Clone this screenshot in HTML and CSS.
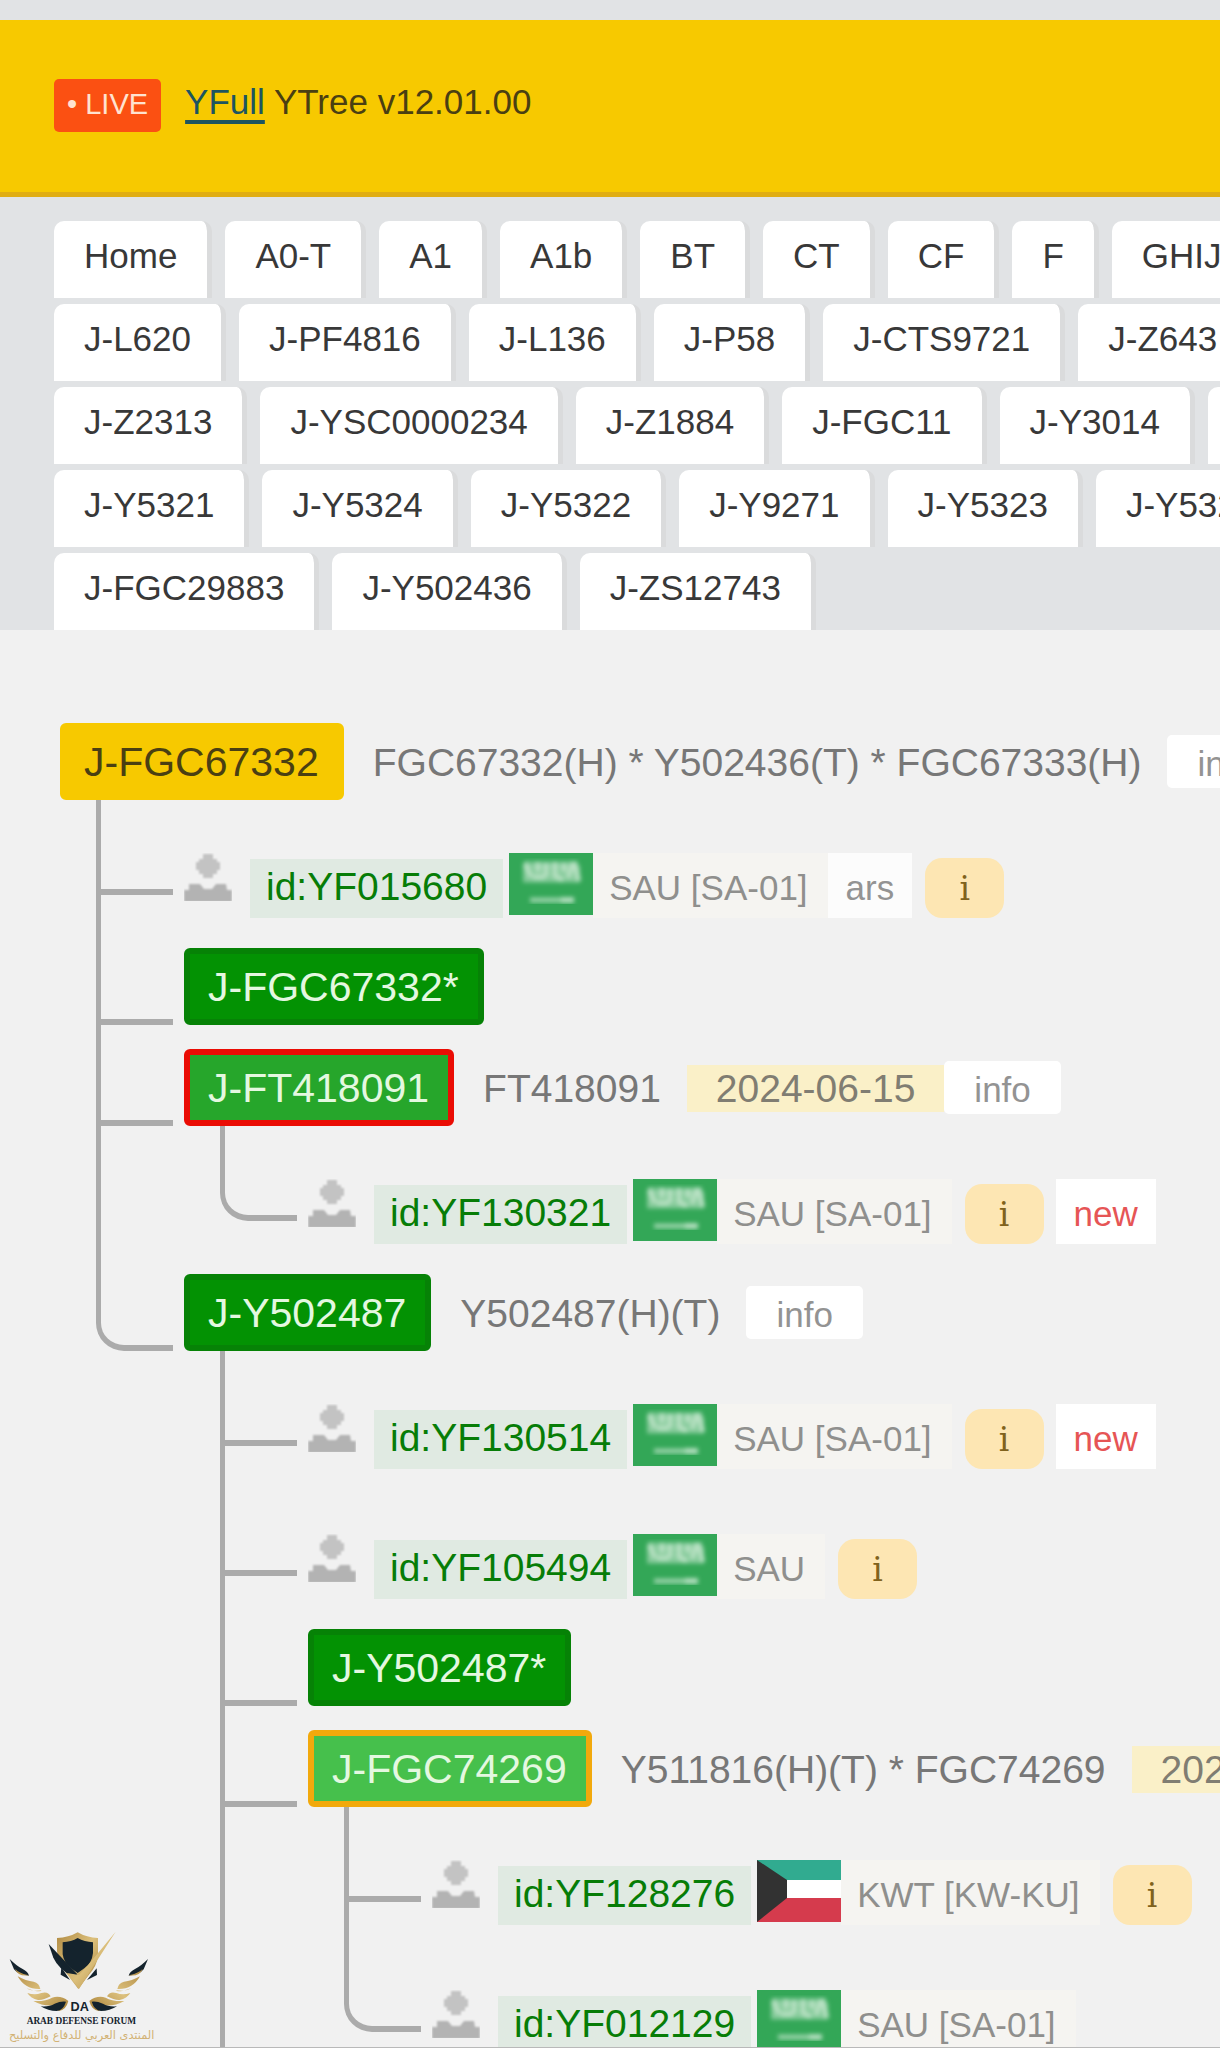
FILE: index.html
```html
<!DOCTYPE html>
<html lang="en">
<head>
<meta charset="utf-8">
<meta name="viewport" content="width=device-width, initial-scale=1">
<title>YFull YTree v12.01.00</title>
<link rel="stylesheet" href="styles.css">
</head>
<body>
<svg class="sprite" aria-hidden="true">
  <defs>
    <filter id="soft"><feGaussianBlur stdDeviation="1"/></filter>
    <filter id="softer"><feGaussianBlur stdDeviation="2"/></filter>
    <symbol id="person" viewBox="0 0 48 48">
      <g filter="url(#soft)">
        <path fill="#c3c3c3" d="M19 1h10v5h4v3h3v8h-3v4h-4v4H19v-4h-4v-4h-3V9h3V6h4z"/>
        <path fill="#b3b3b3" d="M0 49V37h5v-6h11l4 5h8l4-5h10l1 6h5v12z"/>
      </g>
    </symbol>
    <symbol id="sau" viewBox="0 0 84 62">
      <path fill="#33a757" d="M0 0h84v62H0z"/>
      <g filter="url(#softer)" fill="none" stroke="#d5eedb">
        <path stroke-width="5" d="M16 10l6 14M24 24h12M29 9v10M37 10v14M46 9v14l8 4M55 10v9M64 9l-5 16M65 9l5 19" opacity=".6"/>
        <path stroke-width="17" d="M14 21h57" opacity=".5"/>
        <path stroke-width="6" d="M15 11h54" opacity=".4"/>
        <path stroke-width="5" d="M21 47h44" opacity=".6"/>
        <path stroke-width="6" d="M52 47h13" opacity=".5"/>
      </g>
    </symbol>
    <symbol id="kwt" viewBox="0 0 84 62">
      <path fill="#fff" d="M0 0h84v62H0z"/>
      <path fill="#31ab90" d="M0 0h84v20H0z"/>
      <path fill="#d53b4d" d="M0 38h84v24H0z"/>
      <path fill="#323232" d="M0 0l30 20v18L0 62z"/>
    </symbol>
  </defs>
</svg>

<header class="topbar">
  <span class="live">• LIVE</span>
  <h1 class="title"><a href="#home">YFull</a> YTree v12.01.00</h1>
</header>

<nav class="tabs" aria-label="Branches">
  <div class="tabs-row"><a href="#b">Home</a><a href="#b">A0-T</a><a href="#b">A1</a><a href="#b">A1b</a><a href="#b">BT</a><a href="#b">CT</a><a href="#b">CF</a><a href="#b">F</a><a href="#b">GHIJK</a></div>
  <div class="tabs-row"><a href="#b">J-L620</a><a href="#b">J-PF4816</a><a href="#b">J-L136</a><a href="#b">J-P58</a><a href="#b">J-CTS9721</a><a href="#b">J-Z643</a></div>
  <div class="tabs-row"><a href="#b">J-Z2313</a><a href="#b">J-YSC0000234</a><a href="#b">J-Z1884</a><a href="#b">J-FGC11</a><a href="#b">J-Y3014</a><a href="#b">J-Y5320</a></div>
  <div class="tabs-row"><a href="#b">J-Y5321</a><a href="#b">J-Y5324</a><a href="#b">J-Y5322</a><a href="#b">J-Y9271</a><a href="#b">J-Y5323</a><a href="#b">J-Y5325</a></div>
  <div class="tabs-row"><a href="#b">J-FGC29883</a><a href="#b">J-Y502436</a><a href="#b">J-ZS12743</a></div>
</nav>

<main class="tree">
  <div class="clade">
    <a class="name name-root" href="#c">J-FGC67332</a>
    <span class="snps">FGC67332(H) * Y502436(T) * FGC67333(H)</span>
    <a class="info" href="#info">info</a>
  </div>
  <ul class="branch">
    <li class="node">
      <div class="sample">
        <svg class="person"><use href="#person"/></svg>
        <span class="sid">id:YF015680</span>
        <svg class="flag"><use href="#sau"/></svg>
        <span class="country">SAU [SA-01]</span>
        <span class="lang">ars</span>
        <button class="hint" type="button">i</button>
      </div>
    </li>
    <li class="node node-leaf">
      <div class="clade"><a class="name" href="#c">J-FGC67332*</a></div>
    </li>
    <li class="node">
      <div class="clade">
        <a class="name name-red" href="#c">J-FT418091</a>
        <span class="snps">FT418091</span>
        <span class="date">2024-06-15</span>
        <a class="info" href="#info">info</a>
      </div>
      <ul class="branch">
        <li class="node node-last">
          <div class="sample">
            <svg class="person"><use href="#person"/></svg>
            <span class="sid">id:YF130321</span>
            <svg class="flag"><use href="#sau"/></svg>
            <span class="country">SAU [SA-01]</span>
            <button class="hint" type="button">i</button>
            <span class="new">new</span>
          </div>
        </li>
      </ul>
    </li>
    <li class="node node-last">
      <div class="clade">
        <a class="name" href="#c">J-Y502487</a>
        <span class="snps">Y502487(H)(T)</span>
        <a class="info" href="#info">info</a>
      </div>
      <ul class="branch">
        <li class="node">
          <div class="sample">
            <svg class="person"><use href="#person"/></svg>
            <span class="sid">id:YF130514</span>
            <svg class="flag"><use href="#sau"/></svg>
            <span class="country">SAU [SA-01]</span>
            <button class="hint" type="button">i</button>
            <span class="new">new</span>
          </div>
        </li>
        <li class="node">
          <div class="sample">
            <svg class="person"><use href="#person"/></svg>
            <span class="sid">id:YF105494</span>
            <svg class="flag"><use href="#sau"/></svg>
            <span class="country">SAU</span>
            <button class="hint" type="button">i</button>
          </div>
        </li>
        <li class="node node-leaf">
          <div class="clade"><a class="name" href="#c">J-Y502487*</a></div>
        </li>
        <li class="node">
          <div class="clade">
            <a class="name name-orange" href="#c">J-FGC74269</a>
            <span class="snps">Y511816(H)(T) * FGC74269</span>
            <span class="date">2024-06-15</span>
          </div>
          <ul class="branch">
            <li class="node">
              <div class="sample">
                <svg class="person"><use href="#person"/></svg>
                <span class="sid">id:YF128276</span>
                <svg class="flag"><use href="#kwt"/></svg>
                <span class="country">KWT [KW-KU]</span>
                <button class="hint" type="button">i</button>
              </div>
            </li>
            <li class="node node-last">
              <div class="sample">
                <svg class="person"><use href="#person"/></svg>
                <span class="sid">id:YF012129</span>
                <svg class="flag"><use href="#sau"/></svg>
                <span class="country">SAU [SA-01]</span>
              </div>
            </li>
          </ul>
        </li>
      </ul>
    </li>
  </ul>
</main>

<svg class="watermark" viewBox="0 0 510 384" role="img" aria-label="Arab Defense Forum">
  <defs>
    <linearGradient id="gold" x1="0" y1="0" x2="1" y2="1">
      <stop offset="0" stop-color="#b08a42"/><stop offset=".5" stop-color="#dcc07c"/><stop offset="1" stop-color="#a98238"/>
    </linearGradient>
  </defs>
  <path fill="url(#gold)" d="M171 57q35-1 62-17 27 16 61 17v55q-4 30-26 54l-33 44-34-44q-28-28-30-70z"/>
  <path fill="#14232d" d="M188 70q26-2 45-13 20 11 46 13v32q-3 30-26 46l-20 14-20-14q-22-18-25-42z"/>
  <path fill="#14232d" d="M146 75l86 91-12 8q-44-23-60-58z"/>
  <path fill="url(#gold)" d="M347 38l-60 93-50 79-36-48 36 6 28-31z"/>
  <path fill="#14232d" d="M184 145l26 38-28-16zM290 148l1 20-30 15z"/>
  <g id="wing">
    <path fill="#14232d" d="M29 120q22 22 39 30 16 8 19 20-34-4-45-19z"/>
    <path fill="url(#gold)" d="M45 149q10 13 42 20-34 4-42-20zM53 172q25 14 48 16 17 4 20 22-46 2-68-38zM80 208l22 7q24 4 22-1-30 4-44-6zM82 222q22 8 42 0 20-6 28 10-22 12-38 11-22-5-32-21zM100 246q36 2 56-10 26-8 49 10-6 26-28 30-14-6-10-18-34 6-67-12z"/>
    <path fill="#14232d" d="M122 262q26 2 42-8 18-8 34-6-8 26-28 28-26 0-48-14z"/>
  </g>
  <use href="#wing" transform="matrix(-1 0 0 1 473 0)"/>
  <text class="mark-da" x="239" y="277">DA</text>
  <text class="mark-en" x="244" y="315">ARAB DEFENSE FORUM</text>
  <text class="mark-ar" x="245" y="361" direction="rtl">المنتدى العربي للدفاع والتسليح</text>
</svg>
</body>
</html>
```
FILE: styles.css
```css
*,
*::before,
*::after {
  box-sizing: border-box;
}

body {
  margin: 0;
  height: 100vh;
  overflow: hidden;
  position: relative;
  padding-top: 20px;
  border-bottom: 1px solid #b9b9b9;
  background: #e1e3e5;
  font-family: "Liberation Sans", Arial, sans-serif;
  font-size: 35px;
  white-space: nowrap;
}

a {
  color: inherit;
  text-decoration: none;
}

.sprite {
  position: absolute;
  width: 0;
  height: 0;
}

/* Header */
.topbar {
  display: flex;
  align-items: baseline;
  gap: 24px;
  padding: 59px 54px 60px;
  background: #f7c900;
  border-bottom: 5px solid #e0ad12;
}

.live {
  padding: 0 13px 3px;
  border-radius: 5px;
  background: #fb5012;
  color: #ffe3d0;
  font-size: 29px;
  line-height: 50px;
}

.title {
  margin: 0;
  color: #4a3f12;
  font-size: 35px;
  font-weight: 400;
  line-height: 40px;
}

.title a {
  color: #1d5560;
  text-decoration: underline;
  text-decoration-thickness: 4px;
  text-underline-offset: 6px;
}

/* Branch tabs */
.tabs {
  display: grid;
  gap: 6px;
  padding: 24px 0 0 54px;
}

.tabs-row {
  display: flex;
  gap: 13px;
}

.tabs a {
  flex: none;
  padding: 0 30px 7px;
  border-right: 5px solid #dadbdc;
  border-radius: 10px 10px 0 0;
  background: #fff;
  background-clip: padding-box;
  color: #383838;
  line-height: 70px;
}

/* Tree */
.tree {
  min-height: 100%;
  padding: 93px 0 0 60px;
  background: #f1f1f1;
}

.branch {
  margin: 0;
  padding: 0;
  list-style: none;
}

.node {
  position: relative;
  padding-left: 124px;
}

.node-leaf {
  padding-bottom: 6px;
}

.node::before {
  content: "";
  position: absolute;
  top: -18px;
  left: 36px;
  width: 77px;
  height: 95px;
  border: solid #ababab;
  border-width: 0 0 6px 5px;
}

.node::after {
  content: "";
  position: absolute;
  top: 0;
  bottom: 0;
  left: 36px;
  width: 5px;
  background: #ababab;
}

.node-last::before {
  border-bottom-left-radius: 28px;
}

.node-last::after {
  content: none;
}

.clade {
  display: flex;
  align-items: baseline;
  height: 95px;
}

.name {
  padding: 2px 19px 0 18px;
  border: 6px solid #068206;
  border-radius: 6px;
  background: #039203;
  color: #e4f8e0;
  font-size: 41px;
  line-height: 63px;
}

.name-root {
  border-color: #f7c900;
  background: #f7c900;
  color: #4a3f12;
}

.name-red {
  border-color: #ea0c04;
  background: #26a62b;
}

.name-orange {
  border-color: #f2a90c;
  background: #46c04c;
}

.snps {
  margin: 0 26px 0 29px;
  color: #777;
  font-size: 39px;
  line-height: 47px;
}

.date {
  padding: 0 29px;
  background: #faf0c8;
  color: #807d72;
  font-size: 39px;
  line-height: 47px;
}

.info {
  padding: 4px 30px 0;
  border-radius: 5px;
  background: #fff;
  color: #939393;
  line-height: 49px;
}

/* Sample rows */
.sample {
  display: flex;
  align-items: flex-end;
  height: 130px;
  padding: 35px 0 30px;
}

.person {
  align-self: flex-start;
  flex: none;
  width: 48px;
  height: 48px;
  margin-right: 18px;
}

.sid {
  padding: 0 16px 4px;
  background: #e0eae2;
  color: #077d07;
  font-size: 39px;
  line-height: 55px;
}

.flag {
  align-self: flex-start;
  flex: none;
  width: 84px;
  height: 62px;
  margin-left: 6px;
}

.country {
  padding: 5px 20px 0 16px;
  background: #f5f4f1;
  color: #8f8f8d;
  line-height: 60px;
}

.lang,
.new {
  padding: 5px 18px 0;
  background: #fcfcfc;
  color: #939393;
  line-height: 60px;
}

.new {
  margin-left: 12px;
  background: #fff;
  color: #e65555;
}

.hint {
  width: 79px;
  height: 60px;
  margin-left: 13px;
  padding: 0;
  border: 0;
  border-radius: 17px;
  background: #fde6b3;
  color: #80621c;
  font-family: "DejaVu Serif", "Liberation Serif", serif;
  font-size: 33px;
}

/* Forum mark over the lower left corner */
.watermark {
  position: absolute;
  left: 0;
  bottom: 0;
  width: 170px;
  height: 128px;
}

.watermark text {
  text-anchor: middle;
}

.mark-da {
  fill: #14232d;
  font-size: 38px;
  font-weight: 700;
}

.mark-en {
  fill: #14232d;
  font-family: "Liberation Serif", serif;
  font-size: 28px;
  font-weight: 700;
}

.mark-ar {
  fill: #d2b274;
  font-family: "DejaVu Sans", sans-serif;
  font-size: 34px;
}
```
